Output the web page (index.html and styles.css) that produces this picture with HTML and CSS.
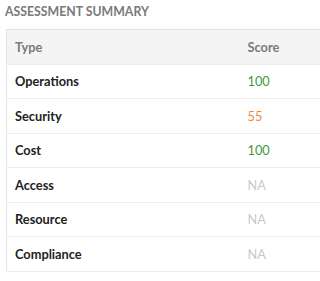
FILE: index.html
```html
<!DOCTYPE html>
<html lang="en">
<head>
<meta charset="utf-8">
<title>Assessment Summary</title>
<link rel="stylesheet" href="styles.css">
</head>
<body>
<section class="summary">
  <h2 class="summary-title">Assessment Summary</h2>
  <div class="table-wrap">
    <table class="summary-table">
      <thead>
        <tr><th class="col-type">Type</th><th class="col-score">Score</th></tr>
      </thead>
      <tbody>
        <tr><td class="col-type">Operations</td><td class="col-score score-good">100</td></tr>
        <tr><td class="col-type">Security</td><td class="col-score score-warn">55</td></tr>
        <tr><td class="col-type">Cost</td><td class="col-score score-good">100</td></tr>
        <tr><td class="col-type">Access</td><td class="col-score score-na">NA</td></tr>
        <tr><td class="col-type">Resource</td><td class="col-score score-na">NA</td></tr>
        <tr><td class="col-type">Compliance</td><td class="col-score score-na">NA</td></tr>
      </tbody>
    </table>
  </div>
</section>
</body>
</html>
```
FILE: styles.css
```css
html, body {
  margin: 0;
  padding: 0;
  background: #ffffff;
}

body {
  font-family: Lato, "Noto Sans", sans-serif;
  color: #222;
}

/* the panel is wider than the viewport; clip its right side */
.summary {
  padding: 4px 0 0 6px;
  width: 314px;
  overflow: hidden;
}

.summary-title {
  margin: 0 0 9px -1px;
  font-size: 12.3px;
  line-height: 16px;
  font-weight: 700;
  letter-spacing: 0;
  text-transform: uppercase;
  color: #7a7a7a;
}

.table-wrap {
  width: 360px;
}

.summary-table {
  width: 100%;
  border-collapse: collapse;
  border: 1.5px solid #e3e3e3;
}

.summary-table th,
.summary-table td {
  height: 34.5px;
  padding: 0 0 0 8px;
  box-sizing: border-box;
  text-align: left;
  font-size: 12.8px;
  font-weight: 700;
  border-bottom: 1px solid #ececec;
}

.summary-table th {
  background: #f4f4f4;
  color: #7b7b7b;
}

.col-type {
  width: 233px;
}

.summary-table td.col-score {
  font-weight: 400;
}

.score-good { color: #3f9a3c; }
.score-warn { color: #ec8a3e; }
.score-na { color: #c9c9c9; }
```
